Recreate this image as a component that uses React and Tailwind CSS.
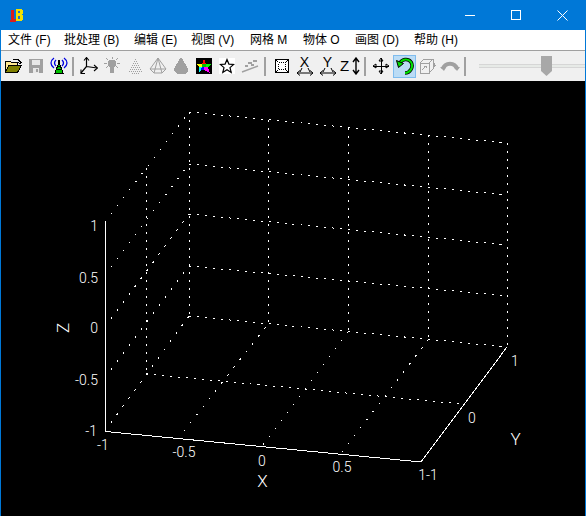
const D = { strokeDasharray: "2 6" };
const DD = { strokeDasharray: "2 8" };

function Plot() {
  const straight = [
    [189, 112, 507, 143], [189, 164, 507, 195], [189, 214, 507, 245], [189, 266, 507, 296], [189, 316, 507, 347],
    [189, 112, 189, 316], [268, 120, 268, 324], [348, 128, 348, 332], [428, 135, 428, 340], [507, 143, 507, 347],
    [146, 168, 146, 374],
    [146, 374, 462, 404],
  ];
  const diag = [
    [105, 222, 189, 112], [105, 275, 189, 164], [105, 327, 189, 214], [105, 378, 189, 266],
    [184, 431, 268, 324], [263, 445, 348, 332], [342, 452, 428, 340], [105, 431, 189, 316],
  ];
  const labels = [
    [98, 231, "1", "end"], [98, 283, "0.5", "end"], [98, 333, "0", "end"], [98, 385, "-0.5", "end"], [97, 436, "-1", "end"],
    [103, 450, "-1", "middle"], [184, 457, "-0.5", "middle"], [262, 466, "0", "middle"], [342, 472, "0.5", "middle"], [428, 480, "1-1", "middle"],
    [472, 423, "0", "middle"], [515, 366, "1", "middle"],
  ];
  return (
    <svg width="584" height="435" viewBox="1 81 584 435" className="block" fontFamily="Roboto, 'Liberation Sans', sans-serif" fontWeight="300">
      <g stroke="#fff" fill="none" shapeRendering="crispEdges">
        {straight.map((l, i) => (
          <line key={i} x1={l[0]} y1={l[1]} x2={l[2]} y2={l[3]} {...D} />
        ))}
        {diag.map((l, i) => (
          <line key={i} x1={l[0]} y1={l[1]} x2={l[2]} y2={l[3]} {...DD} />
        ))}
        <path d="M105.5 222V431.5L421 462L507 347" />
      </g>
      <g fill="#fff" fontSize="14">
        {labels.map((t, i) => (
          <text key={i} x={t[0]} y={t[1]} textAnchor={t[3]}>{t[2]}</text>
        ))}
        <text x="262.5" y="487" fontSize="17" textAnchor="middle">X</text>
        <text x="515.5" y="445" fontSize="17" textAnchor="middle">Y</text>
        <text x="0" y="0" fontSize="17" textAnchor="middle" transform="translate(69 328) rotate(-90)">Z</text>
      </g>
    </svg>
  );
}

const G = "#a0a0a0";
const Ic = ({ children }) => (
  <svg width="18" height="18" viewBox="0 0 18 18" shapeRendering="crispEdges">{children}</svg>
);

const Open = () => (
  <Ic>
    <path d="M1.5 4.5h5l1 1h6v3h-9l-3 7z" fill="#ffe890" stroke="#000" />
    <path d="M1.5 15.5l3-7h13l-4 7z" fill="#808000" stroke="#000" />
    <path d="M9 2.5h5l2 2v2M14 5l2 2 2-2" fill="none" stroke="#000" />
  </Ic>
);
const Save = () => (
  <Ic>
    <path d="M2 2h14v14H2z" fill={G} />
    <path d="M5 3h8v5H5z" fill="#e8e8e8" />
    <path d="M6 11h6v5H6z" fill="#e8e8e8" />
    <path d="M9 12h2v3H9z" fill={G} />
  </Ic>
);
const Signal = () => (
  <Ic>
    <path d="M9 5l4 11H5z" fill="#00c000" stroke="#000" />
    <path d="M7 9h4M6 12h6" stroke="#000" />
    <path d="M8 3h2v3H8z" fill="#000" />
    <path d="M4 1C0 4 0 8 4 11M14 1c4 3 4 7 0 10M6 3C4 5 4 7 6 9M12 3c2 2 2 4 0 6" fill="none" stroke="#0000e0" strokeWidth="1.3" shapeRendering="auto" />
  </Ic>
);
const Axes = () => (
  <Ic>
    <path d="M6.5 1v8.5L1 16M6.5 9.5L17 11" fill="none" stroke="#000" shapeRendering="auto" strokeWidth="1.2" />
    <path d="M4 3.5L6.5 .5 9 3.5M1 12.5V16.5H5M14 8l3.5 3L14 14" fill="none" stroke="#000" shapeRendering="auto" strokeWidth="1.1" />
  </Ic>
);
const Light = () => (
  <Ic>
    <path d="M6 3h6l1 2v3l-2 3v5H7v-5L5 8V5z" fill={G} />
    <path d="M9 0v2M1 6h3M14 6h3M3 1l2 2M15 1l-2 2M3 11l2-2M15 11l-2-2" stroke={G} />
  </Ic>
);
const DotCone = () => {
  const pts = [[9,2],[8,4],[10,4],[7,6],[9,6],[11,6],[6,8],[8,8],[10,8],[12,8],[5,10],[7,10],[9,10],[11,10],[13,10],[4,12],[6,12],[8,12],[10,12],[12,12],[14,12],[3,14],[5,14],[7,14],[9,14],[11,14],[13,14],[15,14],[6,16],[8,16],[10,16],[12,16]];
  return <Ic>{pts.map((p, i) => <rect key={i} x={p[0]} y={p[1]} width="1" height="1" fill={G} />)}</Ic>;
};
const WireCone = () => (
  <Ic>
    <path d="M9 1L1 12l4 4h8l4-4zM9 1L5 16M9 1l4 15M1 12h16" fill="none" stroke={G} shapeRendering="auto" />
  </Ic>
);
const Cone = () => (
  <Ic>
    <path d="M8 1h2l6 11v2l-3 3H5l-3-3v-2z" fill={G} />
  </Ic>
);
const ColorStar = () => (
  <span className="w-4 h-4 bg-black block overflow-hidden">
    <svg width="16" height="16" viewBox="0 0 16 16" shapeRendering="crispEdges">
      <path d="M8 1l2 5H6z" fill="#ff0000" />
      <path d="M1 6h5v3H3z" fill="#ffff00" />
      <path d="M6 6h4v3H6z" fill="#00c000" />
      <path d="M10 6h5l-3 3h-2z" fill="#00ff00" />
      <path d="M3 9h3v2l-3 4z" fill="#00ffff" />
      <path d="M6 9h2v3H5z" fill="#0000ff" />
      <path d="M8 9h4l2 6-6-3z" fill="#ff00ff" />
    </svg>
  </span>
);
const OutlineStar = () => (
  <span className="w-4 h-4 bg-white block">
    <svg width="16" height="16" viewBox="0 0 16 16">
      <path d="M8 1.5l1.9 4.6 4.8.3-3.7 3.2 1.2 4.8L8 11.8l-4.2 2.6L5 9.6 1.3 6.4l4.8-.3z" fill="#fff" stroke="#000" strokeWidth="1.2" />
    </svg>
  </span>
);
const Plane = () => (
  <Ic>
    <path d="M12 3h4v2h-4zM7 5h4v2H7zM4 8h3v2H4zM10 7h3v2h-3z" fill={G} />
    <path d="M1 15L17 9" stroke={G} strokeWidth="1.5" shapeRendering="auto" />
  </Ic>
);
const Box = () => (
  <Ic>
    <path d="M2.5 2.5h13v13h-13z" fill="#fff" stroke="#000" />
    <path d="M5.5 5.5h7v7h-7z" fill="none" stroke="#000" strokeDasharray="1 1" />
    <path d="M3 3l2 2M15 3l-2 2M3 15l2-2M15 15l-2-2" stroke="#000" />
  </Ic>
);
const AxisIcon = ({ l }) => (
  <div className="flex flex-col items-center w-[18px]">
    <span className="block h-[11px] leading-[11px] text-[14px] text-black font-['Liberation_Sans',sans-serif]">{l}</span>
    <svg width="18" height="8" viewBox="0 0 18 8">
      <path d="M6 0L4 4M12 0l2 4M1 5h16M4 2.5L1 5l3 2.5M14 2.5L17 5l-3 2.5" fill="none" stroke="#000" strokeWidth="1" />
    </svg>
  </div>
);
const ZIcon = () => (
  <div className="flex items-center w-[21px] h-[18px]">
    <span className="block w-[11px] text-[15px] leading-[18px] text-black font-['Liberation_Sans',sans-serif]">Z</span>
    <svg width="10" height="18" viewBox="0 0 10 18">
      <path d="M5 1v16M2 5l3-4 3 4M2 13l3 4 3-4" fill="none" stroke="#000" strokeWidth="1.4" />
    </svg>
  </div>
);
const Move = () => (
  <Ic>
    <path d="M9 1v16M1 9h16" stroke="#000" />
    <path d="M7 4l2-3 2 3zM7 14l2 3 2-3zM4 7L1 9l3 2zM14 7l3 2-3 2z" fill="none" stroke="#000" shapeRendering="auto" />
  </Ic>
);
const Rotate = () => (
  <svg width="20" height="20" viewBox="0 0 20 20">
    <path d="M5 7c2-4 8-5 11-1 3 5-1 11-6 11" fill="none" stroke="#000" strokeWidth="3.6" />
    <path d="M5 7c2-4 8-5 11-1 3 5-1 11-6 11" fill="none" stroke="#00e000" strokeWidth="2" />
    <path d="M1.5 4.5l7 3-5 4z" fill="#00e000" stroke="#000" />
  </svg>
);
const Cube = () => (
  <Ic>
    <path d="M2 6h9v10H2zM2 6l4-4h9v10l-4 4M11 6l4-4" fill="none" stroke={G} />
    <path d="M4 13l4-4M8 9H6M8 9v2M15 8h3M16.5 6v4" fill="none" stroke={G} />
  </Ic>
);
const Arc = () => (
  <svg width="20" height="18" viewBox="0 0 20 18">
    <path d="M3 12c2-7 12-7 14 0" fill="none" stroke={G} strokeWidth="4" />
    <path d="M0 10h6l-2 4zM14 10h6l-3 4z" fill={G} />
  </svg>
);

const Btn = ({ children, active }) => (
  <div className={"w-[23px] h-[23px] flex items-center justify-center shrink-0 " + (active ? "bg-[#bbdcf5] border border-[#7fbcee] ml-px -mr-px" : "")}>
    {children}
  </div>
);
const Sep = ({ w }) => (
  <div className={"shrink-0 " + w}>
    <div className="w-[2px] h-[19px] bg-[#a0a0a0]" />
  </div>
);

const menu = [
  ["文件 (F)", "w-[56px]"], ["批处理 (B)", "w-[70px]"], ["编辑 (E)", "w-[57px]"], ["视图 (V)", "w-[59px]"],
  ["网格 M", "w-[53px]"], ["物体 O", "w-[52px]"], ["画图 (D)", "w-[59px]"], ["帮助 (H)", "w-[60px]"],
];

export default function App() {
  return (
    <div className="w-[586px] h-[516px] bg-[#0078d7] px-px flex flex-col overflow-hidden">
      <div className="h-[30px] flex items-center shrink-0 relative">
        <svg width="16" height="14" viewBox="0 0 16 14" className="ml-[8px]" shapeRendering="crispEdges">
          <path d="M2 2h3v9h2v3H1v-2h1z" fill="#d81e1e" />
          <path d="M7 1h6v1h1v4h-1v1h1v5h-1v1H7z" fill="#f0e000" />
          <path d="M9 3h2v2H9zM9 8h2v3H9z" fill="#1e6fd0" />
        </svg>
        <div className="ml-auto flex">
          <div className="w-[46px] h-[30px] flex items-center justify-center">
            <div className="w-[10px] h-px bg-white" />
          </div>
          <div className="w-[46px] h-[30px] flex items-center justify-center">
            <div className="w-[10px] h-[10px] border border-white" />
          </div>
          <div className="w-[46px] h-[30px] flex items-center justify-center">
            <svg width="11" height="11" viewBox="0 0 11 11">
              <path d="M.5.5l10 10M10.5.5l-10 10" stroke="#fff" />
            </svg>
          </div>
        </div>
      </div>

      <div className="h-[20px] bg-white flex items-center pl-[7px] shrink-0 text-[12px] text-black font-['Liberation_Sans','Noto_Sans_CJK_SC',sans-serif] whitespace-nowrap">
        {menu.map(([t, w]) => (
          <span key={t} className={"block " + w}>{t}</span>
        ))}
      </div>

      <div className="h-[31px] bg-[#f0f0f0] border-t border-[#a0a0a0] flex items-center shrink-0 overflow-hidden">
        <Btn><Open /></Btn>
        <Btn><Save /></Btn>
        <Btn><Signal /></Btn>
        <Sep w="w-[7px] pl-[2px]" />
        <Btn><Axes /></Btn>
        <Btn><Light /></Btn>
        <Btn><DotCone /></Btn>
        <Btn><WireCone /></Btn>
        <Btn><Cone /></Btn>
        <Btn><ColorStar /></Btn>
        <Btn><OutlineStar /></Btn>
        <Btn><Plane /></Btn>
        <Sep w="w-[9px] pl-[3px]" />
        <Btn><Box /></Btn>
        <Btn><AxisIcon l="X" /></Btn>
        <Btn><AxisIcon l="Y" /></Btn>
        <Btn><ZIcon /></Btn>
        <Sep w="w-[7px] pl-[2px]" />
        <Btn><Move /></Btn>
        <Btn active><Rotate /></Btn>
        <Btn><Cube /></Btn>
        <Btn><Arc /></Btn>
        <Sep w="w-[7px] pl-[3px]" />
        <div className="flex-1 relative h-[22px] ml-[11px] flex items-center">
          <div className="w-full h-[4px] bg-[#e7eae7] border-y border-[#d6d6d6]" />
          <div className="absolute left-[62px] top-[1px] w-[11px] h-[20px] bg-[#a8a8a8] [clip-path:polygon(0_0,100%_0,100%_75%,50%_100%,0_75%)]" />
        </div>
      </div>

      <div className="flex-1 bg-black">
        <Plot />
      </div>
    </div>
  );
}
